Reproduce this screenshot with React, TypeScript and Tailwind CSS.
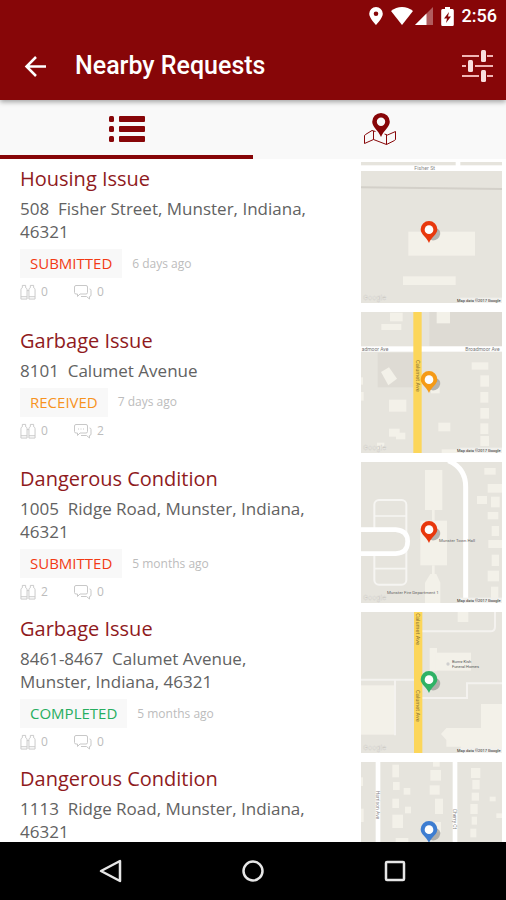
import type { ReactNode } from 'react';

type Status = 'SUBMITTED' | 'RECEIVED' | 'COMPLETED' | 'IN PROGRESS';

interface ServiceRequest {
  id: number;
  title: string;
  address: string;
  status: Status;
  age: string;
  watchers: number;
  comments: number;
  pin: string;
  map: ReactNode;
}

const statusColors: Record<Status, string> = {
  SUBMITTED: 'text-[#f23a14]',
  RECEIVED: 'text-[#f7931e]',
  COMPLETED: 'text-[#27ae60]',
  'IN PROGRESS': 'text-[#3f7fd0]',
};

// x, y, width, height
type Box = [number, number, number, number];

function Buildings({ boxes }: { boxes: Box[] }) {
  return (
    <g fill="#f3f1e9">
      {boxes.map(([x, y, w, h]) => (
        <rect key={`${x}-${y}`} x={x} y={y} width={w} height={h} />
      ))}
    </g>
  );
}

const fisherMap = (
  <>
    <rect y="10" width="423" height="17" fill="#fff" />
    <rect x="284" width="14" height="12" fill="#fff" />
    <path d="M0 76 L423 81" stroke="#d3d0c9" strokeWidth="6" />
    <Buildings boxes={[[142, 209, 200, 72], [126, 343, 158, 26]]} />
    <text x="160" y="24" fontSize="16" fill="#8a8a8a">Fisher St</text>
  </>
);

const broadmoorMap = (
  <>
    <rect x="205" width="218" height="103" fill="#dedbd4" />
    <rect x="50" y="122" width="107" height="104" fill="#dedbd4" />
    <Buildings
      boxes={[
        [87, 2, 38, 26], [61, 36, 60, 18], [227, 0, 40, 34], [84, 263, 52, 36],
        [84, 350, 32, 24], [105, 362, 28, 20], [232, 332, 36, 26], [332, 151, 50, 22],
        [358, 190, 26, 34], [358, 240, 24, 32], [358, 288, 26, 32], [358, 334, 24, 32],
        [358, 372, 26, 30], [210, 210, 26, 34], [48, 392, 22, 20], [242, 412, 60, 11],
        [0, 196, 6, 22], [0, 240, 8, 26],
      ]}
    />
    <path d="M60 180 L84 166 L108 200 L82 220 Z" fill="#f3f1e9" />
    <rect y="103" width="423" height="16" fill="#fff" />
    <rect x="157" width="25" height="423" fill="#fcd65a" />
    <text x="2" y="117" fontSize="15" fill="#777">admoor Ave</text>
    <text x="416" y="117" fontSize="15" textAnchor="end" fill="#777">Broadmoor Ave</text>
    <text transform="translate(165 144) rotate(90)" fontSize="17" fill="#8a7430">Calumet Ave</text>
  </>
);

const townHallMap = (
  <>
    <Buildings
      boxes={[
        [192, 24, 52, 120], [213, 144, 8, 36], [178, 176, 80, 134], [213, 310, 8, 26],
        [370, 18, 34, 20], [380, 66, 43, 26], [348, 102, 30, 24], [390, 104, 26, 32],
        [380, 150, 32, 22], [392, 192, 22, 30], [382, 234, 41, 24], [392, 278, 22, 34],
        [380, 326, 34, 32], [390, 374, 22, 40],
      ]}
    />
    <path d="M208 336 H226 L238 362 V423 H192 V362 Z" fill="#f3f1e9" />
    <rect x="40" y="114" width="96" height="254" rx="14" fill="none" stroke="#f6f5f2" strokeWidth="6" />
    <path d="M40 162 H136 M40 320 H136" stroke="#f6f5f2" strokeWidth="5" />
    <path d="M0 203 L104 203 Q140 206 140 238 Q140 274 104 275 L0 275" fill="#e6e4dd" stroke="#fff" strokeWidth="14" />
    <path d="M262 -4 Q314 18 314 74 V423" fill="none" stroke="#fff" strokeWidth="15" />
    <text x="234" y="240" fontSize="13" fill="#666">Munster Town Hall</text>
    <text x="78" y="395" fontSize="13" fill="#666">Munster Fire Department 1</text>
  </>
);

const calumetMap = (
  <>
    <Buildings boxes={[[0, 220, 102, 148], [290, 0, 32, 30], [206, 108, 22, 70], [224, 122, 106, 54]]} />
    <path d="M360 276 H423 V423 H300 L300 404 H256 V384 L240 366 L256 348 H360 Z" fill="#f3f1e9" />
    <path d="M0 203 H160 M102 203 V370" fill="none" stroke="#f4f2ef" strokeWidth="6" />
    <path d="M182 58 H388 Q402 58 402 44 V0 M182 258 H318 V214 H423" fill="none" stroke="#f4f2ef" strokeWidth="6" />
    <rect x="159" width="25" height="423" fill="#fcd65a" />
    <text transform="translate(166 4) rotate(90)" fontSize="17" fill="#8a7430">Calumet Ave</text>
    <text transform="translate(166 234) rotate(90)" fontSize="17" fill="#8a7430">Calumet Ave</text>
    <circle cx="261" cy="156" r="5" fill="#cfcfcf" />
    <text x="273" y="154" fontSize="12" fill="#555">Burns-Kish</text>
    <text x="273" y="168" fontSize="12" fill="#555">Funeral Homes</text>
  </>
);

const ridgeMap = (
  <>
    <Buildings
      boxes={[
        [94, 8, 20, 38], [96, 60, 20, 24], [128, 78, 20, 20], [94, 110, 20, 28],
        [132, 134, 18, 20], [94, 158, 32, 40], [216, 0, 20, 14], [208, 24, 32, 32],
        [206, 70, 30, 28], [222, 110, 24, 46], [104, 228, 38, 14], [222, 180, 18, 30],
        [330, 18, 28, 30], [334, 54, 22, 28], [332, 92, 22, 24], [328, 126, 22, 30],
        [332, 164, 16, 24], [328, 200, 18, 26], [386, 104, 18, 14], [406, 154, 17, 14],
        [0, 46, 6, 26], [0, 140, 8, 40],
      ]}
    />
    <rect x="44" width="14" height="423" fill="#fff" />
    <rect x="275" width="14" height="423" fill="#fff" />
    <text transform="translate(46 86) rotate(90)" fontSize="15" fill="#888">Harrison Ave</text>
    <text transform="translate(277 140) rotate(90)" fontSize="15" fill="#888">Cherry Ct</text>
  </>
);

const requests: ServiceRequest[] = [
  { id: 1, title: 'Housing Issue', address: '508  Fisher Street, Munster, Indiana, 46321', status: 'SUBMITTED', age: '6 days ago', watchers: 0, comments: 0, pin: '#e8380d', map: fisherMap },
  { id: 2, title: 'Garbage Issue', address: '8101  Calumet Avenue', status: 'RECEIVED', age: '7 days ago', watchers: 0, comments: 2, pin: '#f59a16', map: broadmoorMap },
  { id: 3, title: 'Dangerous Condition', address: '1005  Ridge Road, Munster, Indiana, 46321', status: 'SUBMITTED', age: '5 months ago', watchers: 2, comments: 0, pin: '#e8380d', map: townHallMap },
  { id: 4, title: 'Garbage Issue', address: '8461-8467  Calumet Avenue, Munster, Indiana, 46321', status: 'COMPLETED', age: '5 months ago', watchers: 0, comments: 0, pin: '#2fb266', map: calumetMap },
  { id: 5, title: 'Dangerous Condition', address: '1113  Ridge Road, Munster, Indiana, 46321', status: 'IN PROGRESS', age: '5 months ago', watchers: 0, comments: 0, pin: '#3d7dd1', map: ridgeMap },
];

function MapThumb({ pin, children }: { pin: string; children: ReactNode }) {
  return (
    <svg viewBox="0 0 423 423" className="size-[141px] shrink-0 bg-[#e6e4dd]" fontFamily="Roboto, sans-serif" aria-hidden="true">
      {children}
      <text x="6" y="415" fontSize="22" fill="#f4f3f0" stroke="#cfcdc7" strokeWidth="1">Google</text>
      <rect x="296" y="407" width="127" height="16" fill="#f1f0ec" />
      <text x="419" y="419" fontSize="12" textAnchor="end" fill="#222">Map data ©2017 Google</text>
      <ellipse cx="219" cy="217" rx="20" ry="17" transform="rotate(-40 219 217)" fill="#777" opacity="0.5" />
      <path d="M204 243 C198 226 179 218 179 202 A25 25 0 0 1 229 202 C229 218 210 226 204 243 Z" fill={pin} />
      <circle cx="204" cy="203" r="13" fill="#fff" />
    </svg>
  );
}

function BinocularsIcon() {
  return (
    <svg viewBox="0 0 17 17" className="w-4 h-4" fill="none" stroke="#c8c8c8" strokeWidth="1" aria-hidden="true">
      <path d="M1 16 V6 Q1 4.500 2.500 4 V1.500 H6 V4 Q7.500 4.500 7.500 6 V16 Z M9.500 16 V6 Q9.500 4.500 11 4 V1.500 H14.500 V4 Q16 4.500 16 6 V16 Z" />
      <path d="M1 13.500 H7.500 M9.500 13.500 H16 M7.500 7 H9.500" />
    </svg>
  );
}

function CommentsIcon({ active }: { active: boolean }) {
  return (
    <svg viewBox="0 0 18 16" className="w-[18px] h-4" fill="none" stroke="#c8c8c8" strokeWidth="1" aria-hidden="true">
      <path d="M2 1.500 H12 Q13.500 1.500 13.500 3 V8.500 Q13.500 10 12 10 H6 L3.500 12.500 V10 H2 Q0.500 10 0.500 8.500 V3 Q0.500 1.500 2 1.500 Z" />
      <path d="M15.500 5 Q17 5 17 6.500 V11 Q17 12.500 15.500 12.500 H15.500 V15 L12.500 12.500 H7" />
      {active && <path d="M4 6 H5 M6.500 6 H7.500 M9 6 H10" />}
    </svg>
  );
}

function RequestRow({ request }: { request: ServiceRequest }) {
  return (
    <li className="flex items-center justify-between pl-5 pr-1">
      <div className="w-[300px]">
        <h2 className="text-xl leading-7 text-[#8f1a1d]">{request.title}</h2>
        <p className="mt-1 text-[17px] leading-[23px] text-[#626262] whitespace-pre-wrap">{request.address}</p>
        <div className="mt-1.5 flex items-center gap-[10px]">
          <span className={`bg-[#f8f8f8] px-[10px] text-[15px] leading-[29px] ${statusColors[request.status]}`}>
            {request.status}
          </span>
          <span className="text-xs leading-5 text-[#bcbcbc]">{request.age}</span>
        </div>
        <div className="mt-1.5 flex text-xs leading-4 text-[#bcbcbc]">
          <span className="flex w-[54px] items-center gap-[5px]"><BinocularsIcon />{request.watchers}</span>
          <span className="flex items-center gap-[5px]"><CommentsIcon active={request.comments > 0} />{request.comments}</span>
        </div>
      </div>
      <MapThumb pin={request.pin}>{request.map}</MapThumb>
    </li>
  );
}

function StatusBar() {
  return (
    <div className="flex h-8 items-center justify-end pr-[9px] text-white">
      <svg viewBox="0 0 14 18" className="w-[14px] h-[18px] mr-2" fill="#fff" aria-hidden="true">
        <path fillRule="evenodd" d="M7 0 A6.800 6.800 0 0 1 13.800 6.800 C13.800 11 7 18 7 18 C7 18 0.200 11 0.200 6.800 A6.800 6.800 0 0 1 7 0 Z M7 4.500 A2.300 2.300 0 1 0 7 9.100 A2.300 2.300 0 1 0 7 4.500 Z" />
      </svg>
      <svg viewBox="0 0 22 18" className="w-[22px] h-[18px] mr-[2px]" fill="#fff" aria-hidden="true">
        <path d="M11 18 L0 4 Q5 0 11 0 Q17 0 22 4 Z" />
      </svg>
      <svg viewBox="0 0 18 18" className="w-[18px] h-[18px] mr-2" fill="#fff" aria-hidden="true">
        <path d="M18 0 V18 H0 Z" opacity="0.35" />
        <path d="M11.500 6.500 V18 H0 Z" />
      </svg>
      <svg viewBox="0 0 13 19" className="w-[13px] h-[19px] mr-2" aria-hidden="true">
        <path d="M1.500 2 H4 V0 H9 V2 H11.500 Q12.800 2 12.800 3.500 V17.500 Q12.800 19 11.500 19 H1.500 Q0.200 19 0.200 17.500 V3.500 Q0.200 2 1.500 2 Z" fill="#fff" />
        <path d="M8 5 L3 11.500 H6 L5 16 L10 9.500 H7 Z" fill="#870608" />
      </svg>
      <span className="font-[Roboto,sans-serif] text-lg leading-8 font-medium">2:56</span>
    </div>
  );
}

export default function App() {
  return (
    <div className="flex h-screen flex-col overflow-hidden bg-white font-['Open_Sans',sans-serif]">
      <header className="relative z-10 shrink-0 bg-[#870608] shadow-[0_2px_5px_rgba(0,0,0,0.35)]">
        <StatusBar />
        <div className="flex h-[68px] items-center pl-6 pr-[13px]">
          <button type="button" aria-label="Back" className="mr-7">
            <svg viewBox="0 0 23 23" className="size-[23px]" fill="none" stroke="#fff" strokeWidth="2.500" aria-hidden="true">
              <path d="M22 11.500 H3 M12 2 L2.500 11.500 L12 21" />
            </svg>
          </button>
          <h1 className="flex-1 font-[Roboto,sans-serif] text-[25px] leading-8 font-medium text-white">Nearby Requests</h1>
          <button type="button" aria-label="Filter requests">
            <svg viewBox="0 0 32 32" className="size-8" aria-hidden="true">
              <path d="M1 6 H18 M26 6 H32 M1 16 H5 M14 16 H32 M1 26 H18 M26 26 H32" stroke="#f0b5b5" strokeWidth="2" />
              <g fill="#f8dede">
                <rect x="20" y="0" width="5" height="12" rx="1.500" />
                <rect x="7" y="10" width="5" height="12" rx="1.500" />
                <rect x="20" y="20" width="5" height="12" rx="1.500" />
              </g>
            </svg>
          </button>
        </div>
      </header>

      <nav className="flex h-[59px] shrink-0 bg-[#f9f9f9]">
        <button type="button" aria-label="List view" className="flex flex-1 items-center justify-center border-b-4 border-[#870608] pt-[3px]">
          <svg viewBox="0 0 36 26" className="w-9 h-[26px]" fill="#870608" aria-hidden="true">
            <rect x="0" y="0" width="5" height="6" rx="1.500" />
            <rect x="0" y="10" width="5" height="6" rx="1.500" />
            <rect x="0" y="20" width="5" height="6" rx="1.500" />
            <rect x="10" y="0" width="26" height="6" rx="1" />
            <rect x="10" y="10" width="26" height="6" rx="1" />
            <rect x="10" y="20" width="26" height="6" rx="1" />
          </svg>
        </button>
        <button type="button" aria-label="Map view" className="flex flex-1 items-center justify-center border-b-4 border-transparent pt-[3px]">
          <svg viewBox="0 0 32 32" className="size-8" fill="none" stroke="#870608" aria-hidden="true">
            <path
              d="M11.500 18.500 L8 17.500 L1.500 21.500 Q0.500 22 0.500 23 V30.500 L9.500 26.500 L22.500 31.500 L30.500 27.500 Q31.500 27 31.500 26 V18.500 L23.500 22 L20.500 21 M9.500 18 V26.500 M22.500 22 V31.500"
              strokeWidth="1"
              strokeLinejoin="round"
            />
            <path
              fillRule="evenodd"
              fill="#870608"
              stroke="none"
              d="M17 0 A8.800 8.800 0 0 1 25.800 8.800 C25.800 14 20 17 17 24 C14 17 8.200 14 8.200 8.800 A8.800 8.800 0 0 1 17 0 Z M17 4.600 A4.200 4.200 0 1 0 17 13 A4.200 4.200 0 1 0 17 4.600 Z"
            />
          </svg>
        </button>
      </nav>

      <main className="min-h-0 flex-1 overflow-y-auto pt-[3px] [scrollbar-width:none]">
        <ul className="flex flex-col gap-[9px]">
          {requests.map((request) => (
            <RequestRow key={request.id} request={request} />
          ))}
        </ul>
      </main>

      <footer className="grid h-[58px] shrink-0 grid-cols-3 bg-black px-10">
        <button type="button" aria-label="System back" className="flex items-center justify-center">
          <svg viewBox="0 0 24 24" className="size-6" fill="none" stroke="#e6e6e6" strokeWidth="2.500" strokeLinejoin="round" aria-hidden="true">
            <path d="M21 2 V22 L2 12 Z" />
          </svg>
        </button>
        <button type="button" aria-label="Home" className="flex items-center justify-center">
          <svg viewBox="0 0 24 24" className="size-6" fill="none" stroke="#e6e6e6" strokeWidth="2.500" aria-hidden="true">
            <circle cx="12" cy="12" r="9.500" />
          </svg>
        </button>
        <button type="button" aria-label="Recent apps" className="flex items-center justify-center">
          <svg viewBox="0 0 24 24" className="size-6" fill="none" stroke="#e6e6e6" strokeWidth="2.500" aria-hidden="true">
            <rect x="3" y="3" width="18" height="18" rx="1" />
          </svg>
        </button>
      </footer>
    </div>
  );
}
